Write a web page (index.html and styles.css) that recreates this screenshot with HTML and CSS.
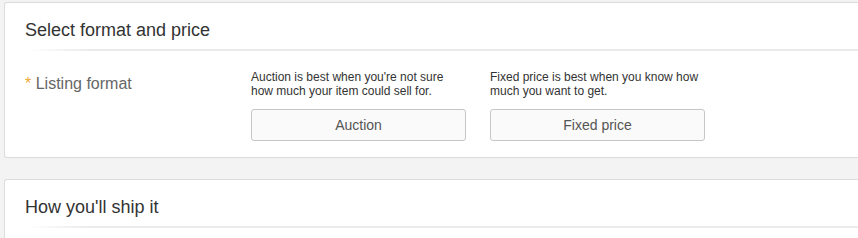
FILE: index.html
```html
<!DOCTYPE html>
<html lang="en">
<head>
    <meta charset="UTF-8">
    <title>Select format and price</title>
    <link rel="stylesheet" href="styles.css">
</head>
<body>
    <div class="page">
        <section class="panel">
            <h2 class="panel-title">Select format and price</h2>
            <div class="panel-rule"></div>
            <div class="format-row">
                <div class="field-label"><span class="required">*</span> Listing format</div>
                <div class="format-option">
                    <p>Auction is best when you're not sure how much your item could sell for.</p>
                    <button class="format-button">Auction</button>
                </div>
                <div class="format-option">
                    <p>Fixed price is best when you know how much you want to get.</p>
                    <button class="format-button">Fixed price</button>
                </div>
            </div>
        </section>
        <section class="panel panel-shipping">
            <h2 class="panel-title">How you'll ship it</h2>
            <div class="panel-rule"></div>
        </section>
    </div>
</body>
</html>
```

FILE: styles.css
```css
body {
    margin: 0;
    padding: 0;
    background-color: #f3f3f3;
    font-family: "Liberation Sans", Arial, sans-serif;
    overflow: hidden;
}

.page {
    padding: 2px 0 0 4px;
}

.panel {
    background-color: #fff;
    border: 1px solid #dcdcdc;
    border-right: none;
    border-radius: 3px 0 0 3px;
    margin-right: -10px;
    margin-bottom: 21px;
}

.panel-shipping {
    min-height: 120px;
}

.panel-title {
    margin: 0;
    padding: 17px 0 9px 20px;
    font-size: 18px;
    line-height: 20px;
    font-weight: normal;
    color: #333;
}

.panel-rule {
    height: 2px;
    margin-left: 22px;
    background: linear-gradient(to right, rgba(232, 232, 232, 0), #ebebeb 60px);
}

.format-row {
    display: flex;
    padding: 19px 0 16px 20px;
}

.field-label {
    width: 226px;
    padding-top: 5px;
    font-size: 16px;
    line-height: 18px;
    color: #666;
}

.required {
    color: #f0a830;
}

.format-option {
    width: 215px;
    margin-right: 24px;
}

.format-option p {
    margin: 0 0 11px;
    font-size: 12px;
    line-height: 14px;
    color: #333;
}

.format-button {
    display: block;
    width: 215px;
    height: 32px;
    background-color: #fafafa;
    border: 1px solid #c6c6c6;
    border-radius: 3px;
    font-family: inherit;
    font-size: 14px;
    color: #555;
    cursor: pointer;
}
```
